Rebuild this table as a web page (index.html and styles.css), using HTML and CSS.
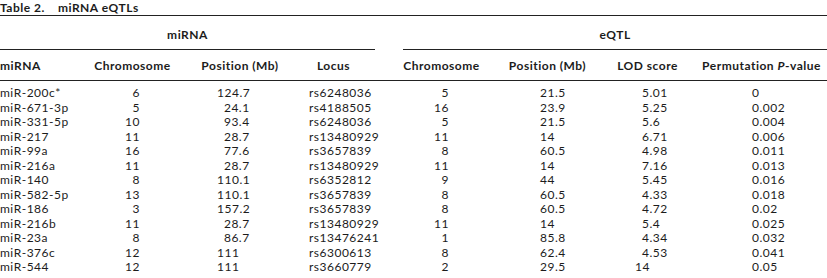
FILE: index.html
```html
<!DOCTYPE html>
<html lang="en">
<head>
  <meta charset="UTF-8">
  <meta name="viewport" content="width=device-width, initial-scale=1.0">
  <title>Table 2. miRNA eQTLs</title>
  <link rel="stylesheet" href="styles.css">
</head>
<body>
<p class="caption"><span class="label">Table 2.</span>miRNA eQTLs</p>

<table class="eqtl">
  <colgroup>
    <col class="c-name">
    <col class="c-chr">
    <col class="c-pos">
    <col class="c-locus">
    <col class="c-gap">
    <col class="c-chr2">
    <col class="c-pos2">
    <col class="c-lod">
    <col class="c-perm">
  </colgroup>
  <thead>
    <tr class="group">
      <th colspan="4" class="ruled">miRNA</th>
      <th></th>
      <th colspan="4" class="ruled">eQTL</th>
    </tr>
    <tr class="heads">
      <th class="left">miRNA</th>
      <th>Chromosome</th>
      <th>Position (Mb)</th>
      <th class="locus-head">Locus</th>
      <th></th>
      <th>Chromosome</th>
      <th>Position (Mb)</th>
      <th>LOD score</th>
      <th class="perm-head">Permutation <i>P</i>-value</th>
    </tr>
  </thead>
  <tbody>
    <tr class="first"><td>miR-200c*</td><td class="chr">6</td><td class="pos">124.7</td><td class="locus">rs6248036</td><td></td><td class="chr2">5</td><td class="pos2">21.5</td><td class="lod">5.01</td><td class="perm">0</td></tr>
    <tr><td>miR-671-3p</td><td class="chr">5</td><td class="pos n2">24.1</td><td class="locus">rs4188505</td><td></td><td class="chr2">16</td><td class="pos2">23.9</td><td class="lod">5.25</td><td class="perm">0.002</td></tr>
    <tr><td>miR-331-5p</td><td class="chr">10</td><td class="pos n2">93.4</td><td class="locus">rs6248036</td><td></td><td class="chr2">5</td><td class="pos2">21.5</td><td class="lod">5.6</td><td class="perm">0.004</td></tr>
    <tr><td>miR-217</td><td class="chr">11</td><td class="pos n2">28.7</td><td class="locus">rs13480929</td><td></td><td class="chr2">11</td><td class="pos2">14</td><td class="lod">6.71</td><td class="perm">0.006</td></tr>
    <tr><td>miR-99a</td><td class="chr">16</td><td class="pos n2">77.6</td><td class="locus">rs3657839</td><td></td><td class="chr2">8</td><td class="pos2">60.5</td><td class="lod">4.98</td><td class="perm">0.011</td></tr>
    <tr><td>miR-216a</td><td class="chr">11</td><td class="pos n2">28.7</td><td class="locus">rs13480929</td><td></td><td class="chr2">11</td><td class="pos2">14</td><td class="lod">7.16</td><td class="perm">0.013</td></tr>
    <tr><td>miR-140</td><td class="chr">8</td><td class="pos">110.1</td><td class="locus">rs6352812</td><td></td><td class="chr2">9</td><td class="pos2">44</td><td class="lod">5.45</td><td class="perm">0.016</td></tr>
    <tr><td>miR-582-5p</td><td class="chr">13</td><td class="pos">110.1</td><td class="locus">rs3657839</td><td></td><td class="chr2">8</td><td class="pos2">60.5</td><td class="lod">4.33</td><td class="perm">0.018</td></tr>
    <tr><td>miR-186</td><td class="chr">3</td><td class="pos">157.2</td><td class="locus">rs3657839</td><td></td><td class="chr2">8</td><td class="pos2">60.5</td><td class="lod">4.72</td><td class="perm">0.02</td></tr>
    <tr><td>miR-216b</td><td class="chr">11</td><td class="pos n2">28.7</td><td class="locus">rs13480929</td><td></td><td class="chr2">11</td><td class="pos2">14</td><td class="lod">5.4</td><td class="perm">0.025</td></tr>
    <tr><td>miR-23a</td><td class="chr">8</td><td class="pos n2">86.7</td><td class="locus">rs13476241</td><td></td><td class="chr2">1</td><td class="pos2">85.8</td><td class="lod">4.34</td><td class="perm">0.032</td></tr>
    <tr><td>miR-376c</td><td class="chr">12</td><td class="pos">111</td><td class="locus">rs6300613</td><td></td><td class="chr2">8</td><td class="pos2">62.4</td><td class="lod">4.53</td><td class="perm">0.041</td></tr>
    <tr class="last"><td>miR-544</td><td class="chr">12</td><td class="pos">111</td><td class="locus">rs3660779</td><td></td><td class="chr2">2</td><td class="pos2">29.5</td><td class="lod out">14</td><td class="perm">0.05</td></tr>
  </tbody>
</table>
</body>
</html>
```

FILE: styles.css
```css
body {
  margin: 0;
  background-color: white;
  color: #1c1c1c;
  font-family: Lato, "Open Sans", sans-serif;
  font-size: 12px;
  letter-spacing: 0.5px;
}

.caption {
  margin: 0;
  height: 15px;
  line-height: 15px;
  font-size: 12px;
  font-weight: 700;
  border-bottom: 1px solid #222;
}

.caption .label {
  margin-right: 13px;
}

.eqtl {
  width: 827px;
  border-collapse: collapse;
  table-layout: fixed;
  border-bottom: 2px solid #222;
}

.c-name { width: 85px; }
.c-chr { width: 95px; }
.c-pos { width: 120px; }
.c-locus { width: 75px; }
.c-gap { width: 28px; }
.c-chr2 { width: 77px; }
.c-pos2 { width: 135px; }
.c-lod { width: 65px; }
.c-perm { width: 147px; }

th {
  font-weight: 700;
  padding: 0;
  text-align: center;
}

.group th {
  height: 29px;
  padding-top: 4px;
}

.group th.ruled {
  border-bottom: 1px solid #222;
}

.heads th {
  height: 30px;
  border-bottom: 1px solid #222;
}

.heads th.left {
  text-align: left;
}

.heads th.locus-head {
  padding-right: 8px;
}

.heads th.perm-head {
  padding-left: 16px;
  white-space: nowrap;
}

td {
  padding: 0;
  height: 14.5px;
  line-height: 14.5px;
  white-space: nowrap;
}

tr.first td {
  padding-top: 5px;
}

tr.last td {
  padding-bottom: 4px;
}

td.chr {
  text-align: right;
  padding-right: 40px;
}

td.pos {
  padding-left: 37px;
}

td.pos.n2 {
  padding-left: calc(37px + 1ch);
}

td.locus {
  padding-left: 9px;
}

td.chr2 {
  text-align: right;
  padding-right: 31px;
}

td.pos2 {
  padding-left: 60px;
}

td.lod {
  padding-left: 27px;
}

td.lod.out {
  padding-left: 20px;
}

td.perm {
  padding-left: 72px;
}
```
